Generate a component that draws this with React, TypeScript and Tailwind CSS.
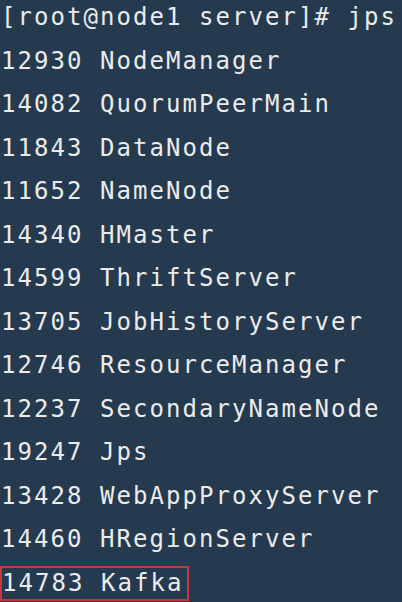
const lines: [string, string][] = [
  ["12930", "NodeManager"],
  ["14082", "QuorumPeerMain"],
  ["11843", "DataNode"],
  ["11652", "NameNode"],
  ["14340", "HMaster"],
  ["14599", "ThriftServer"],
  ["13705", "JobHistoryServer"],
  ["12746", "ResourceManager"],
  ["12237", "SecondaryNameNode"],
  ["19247", "Jps"],
  ["13428", "WebAppProxyServer"],
  ["14460", "HRegionServer"],
];

export default function App() {
  return (
    <div className="w-[402px] h-[602px] overflow-hidden bg-[#253a4f] text-[#ebebeb]">
      <div className="-mt-[4px] pl-[1px] font-['DejaVu_Sans_Mono',monospace] text-[24px] leading-[43.5px] tracking-[2.05px] whitespace-pre">
        <div>[root@node1 server]# jps</div>
        {lines.map(([pid, name]) => (
          <div key={pid}>
            {pid} {name}
          </div>
        ))}
        <div className="flex items-center h-[43.5px]">
          <span className="-ml-[1px] inline-block w-[189px] h-[35px] border-2 border-[#c23a3c] leading-[31px] pl-[0px]">
            14783 Kafka
          </span>
        </div>
      </div>
    </div>
  );
}
